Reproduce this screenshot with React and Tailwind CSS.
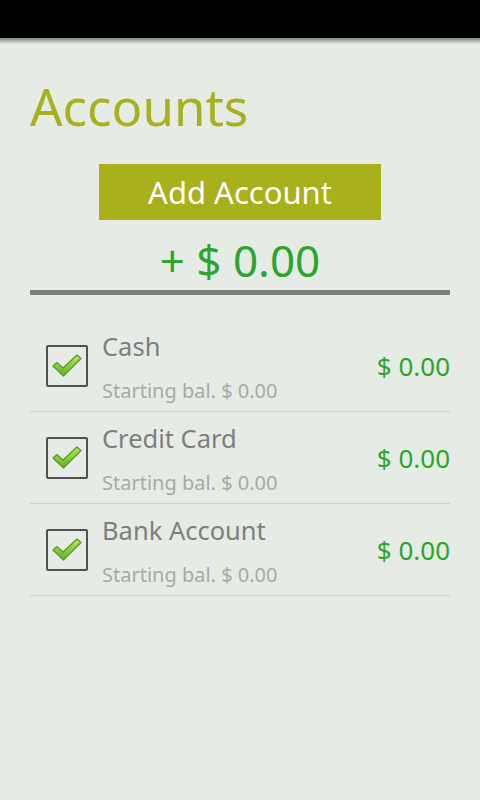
import React from "react";

const font = { fontFamily: '"Noto Sans", "Open Sans", sans-serif' };

function Check() {
  return (
    <div className="w-[42px] h-[42px] border-2 border-[#4f534f] rounded-[2px] flex items-center justify-center shrink-0">
      <svg width="32" height="26" viewBox="0 0 32 26">
        <defs>
          <linearGradient id="g" x1="0" y1="0" x2="0" y2="1">
            <stop offset="0" stopColor="#b6ea5a" />
            <stop offset="1" stopColor="#5cb31c" />
          </linearGradient>
        </defs>
        <path
          d="M2 13 L6 9.5 L12 15 L26 2 L30 5.5 L12.5 23 Z"
          fill="url(#g)"
          stroke="#5a9a24"
          strokeWidth="1.2"
          strokeLinejoin="round"
        />
      </svg>
    </div>
  );
}

function Row({ name }) {
  return (
    <div className="h-[92px] border-b border-[#cdd2cd] flex items-center pl-4">
      <Check />
      <div className="flex flex-col ml-[14px] flex-1 pt-[4px]">
        <div className="text-[25.5px] leading-[34px] text-[#7b807b]">{name}</div>
        <div className="text-[20px] leading-[30px] text-[#a6aba6] mt-[13px]">Starting bal. $ 0.00</div>
      </div>
      <div className="text-[26px] leading-[34px] text-[#2aa62a]">$ 0.00</div>
    </div>
  );
}

export default function App() {
  return (
    <div className="w-[480px] h-[800px] bg-[#e6ebe6] flex flex-col" style={font}>
      <div className="h-[38px] bg-black shrink-0" />
      <div className="h-[6px] bg-gradient-to-b from-[#7d827d] to-[#e6ebe6] shrink-0" />
      <div className="px-[30px] flex flex-col">
        <div className="text-[51px] leading-[64px] text-[#a8b01e] mt-[30px]">Accounts</div>
        <div className="flex justify-center mt-[26px]">
          <div className="w-[282px] h-[56px] bg-[#a8b01c] text-white text-[31px] flex items-center justify-center">
            Add Account
          </div>
        </div>
        <div className="text-center text-[44px] leading-[60px] text-[#2aa62a] mt-[10px]">+ $ 0.00</div>
        <div className="h-[5px] bg-[#7b807b]" />
        <div className="mt-[25px]">
          <Row name="Cash" />
          <Row name="Credit Card" />
          <Row name="Bank Account" />
        </div>
      </div>
    </div>
  );
}
